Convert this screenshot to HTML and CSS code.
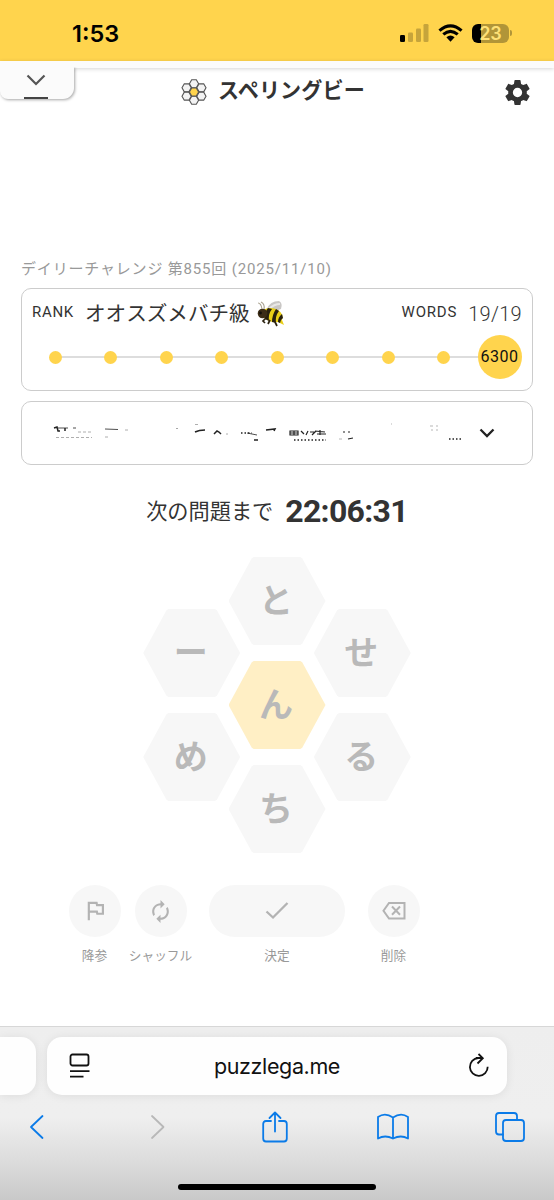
FILE: index.html
```html
<!DOCTYPE html>
<html lang="ja">
<head>
<meta charset="utf-8">
<title>スペリングビー</title>
<link rel="stylesheet" href="styles.css">
</head>
<body>
<div class="status">
  <span class="clock">1:53</span>
  <div class="indicators">
    <svg class="signal" width="30" height="18" viewBox="0 0 30 18"><rect x="0" y="11" width="5" height="7" rx="1.3"/><g opacity=".22"><rect x="8" y="8.500" width="5" height="9.500" rx="1.300"/><rect x="16" y="4.500" width="5" height="13.500" rx="1.300"/><rect x="23.500" y="0" width="5" height="18" rx="1.300"/></g></svg>
    <svg class="wifi" width="25" height="18" viewBox="0 0 26 18"><g fill="none" stroke="#000" stroke-width="3.200"><path d="M1.500 6.500Q13-3.500 24.500 6.500"/><path d="M5.500 10.500Q13 4 20.500 10.500"/></g><path d="M8.700 13.300Q13 9.800 17.300 13.300L13 18Z"/></svg>
    <div class="battery"><span>23</span></div><i class="battery-tip"></i>
  </div>
</div>
<div class="strip"></div>
<header class="header">
  <div class="pull-tab"><svg width="20" height="12" viewBox="0 0 20 12"><path d="M1.500 1.500L10 10L18.500 1.500" fill="none" stroke="#555" stroke-width="2.200"/></svg><i></i></div>
  <div class="brand">
    <svg width="26" height="28" viewBox="-13 -14 26 28"><defs><path id="cell" d="M-4.600 0L-2.300-4H2.300L4.600 0L2.300 4H-2.300Z" stroke="#555" stroke-width="1.100"/></defs><g fill="#f3f3f3"><use href="#cell" y="-8.300"/><use href="#cell" y="8.300"/><use href="#cell" x="-7.400" y="-4.150"/><use href="#cell" x="-7.400" y="4.150"/><use href="#cell" x="7.400" y="-4.150"/><use href="#cell" x="7.400" y="4.150"/></g><use href="#cell" fill="#ffd44d"/></svg>
    <h1>スペリングビー</h1>
  </div>
  <svg class="gear" width="31" height="31" viewBox="0 0 24 24"><path fill="#333" d="M19.140 12.940c.04-.3.060-.61.060-.94 0-.32-.02-.64-.07-.94l2.030-1.580c.18-.14.230-.41.120-.61l-1.920-3.320c-.12-.22-.37-.29-.59-.22l-2.390.96c-.5-.38-1.030-.7-1.620-.94l-.36-2.540c-.04-.24-.24-.41-.48-.41h-3.840c-.24 0-.43.170-.47.410l-.36 2.540c-.59.240-1.130.57-1.620.94l-2.390-.96c-.22-.08-.47 0-.59.220L2.740 8.870c-.12.210-.08.470.120.610l2.030 1.580c-.05.300-.09.630-.09.940s.02.640.07.940l-2.030 1.580c-.18.140-.23.410-.12.610l1.920 3.320c.12.220.37.290.59.220l2.390-.96c.5.380 1.030.7 1.620.94l.36 2.540c.05.240.24.410.48.410h3.840c.24 0 .44-.17.470-.41l.36-2.540c.59-.24 1.130-.56 1.620-.94l2.390.96c.22.080.47 0 .59-.22l1.920-3.320c.12-.22.070-.47-.12-.61zM12 15.600A3.600 3.600 0 1 1 12 8.400a3.600 3.600 0 0 1 0 7.200z"/></svg>
</header>
<main>
  <p class="daily">デイリーチャレンジ 第855回 (2025/11/10)</p>
  <section class="card rank">
    <div class="rank-row">
      <span class="small">RANK</span><span class="level">オオスズメバチ級</span>
      <svg class="bee" width="30" height="28" viewBox="0 0 30 28">
        <path d="M10 9Q13 1 22 1Q26 3 24 9Q19 12 10 10Z" fill="#c9c7c5"/><path d="M12 9Q17 4 23 4" stroke="#e9e8e6" stroke-width="2" fill="none"/>
        <path d="M6 10Q13 6 21 10Q27 14 25 20L27 25L21 22Q13 23 7 18Z" fill="#e9cf17"/>
        <path d="M11 8L15 9Q11 14 12 21L8 19Q7 13 11 8ZM19 9L22 11Q18 16 19 23L15 22Q15 15 19 9ZM25 14L26 18Q23 20 23 23L21 22Q21 17 25 14Z" fill="#28200f"/>
        <circle cx="5.500" cy="13.500" r="4.800" fill="#3b2c16"/><circle cx="3.500" cy="13" r="1.400" fill="#120e09"/>
        <path d="M5 9Q4 3 1 3M7 9Q8 4 4 2" stroke="#aaa391" stroke-width="1.100" fill="none"/>
        <path d="M9 18L6 21L8 23M13 20L11 24M18 22L20 26" stroke="#2a210f" stroke-width="1.700" fill="none"/>
      </svg>
      <span class="small words">WORDS</span><span class="count">19/19</span>
    </div>
    <div class="track"><i></i><i></i><i></i><i></i><i></i><i></i><i></i><i></i><b>6300</b></div>
  </section>
  <section class="card redacted">
    <svg class="marks" width="420" height="24" viewBox="50 420 420 24" fill="none" stroke="#222">
      <path stroke-width="1.500" d="M54 427L57 426L58 430H60M65 427V430M195 431Q199 429 205 429M214 433L217 430L219 431L221 433M254 439H258M266 429L275 428L274 430"/>
      <path stroke-width=".8" d="M58 427H68M73 427H76M105 428L118 428.500M177 427V428M247 432L257 434"/>
      <path stroke-width=".8" stroke="#999" stroke-dasharray="3 2" d="M56 436.500H92M78 431H91M105 436H108M125 429H130M195 423.500H199M226 433H228"/>
      <path stroke-width="1.300" stroke-dasharray="1.500 2" d="M241 432H252M294 439H326M449 438H463"/>
      <path stroke-width="1.200" d="M290 430H298V434H290ZM290 432H298M294 430V434M301 430L304 433M308 430L306 434M310 431H315L312 434M315 430L325 431M317 433H326M320 429V434M343 431H345M348 431H350M348 438L353 437"/>
      <path stroke-width=".7" stroke="#999" d="M339 438H342M391 423H392M430 425H433M436 425H438M431 429H433M436 429H438"/>
    </svg>
    <svg class="down" width="16" height="11" viewBox="0 0 16 11"><path d="M1.500 1.500L8 8L14.500 1.500" fill="none" stroke="#222" stroke-width="2.300"/></svg>
  </section>
  <div class="timer"><span>次の問題まで</span><strong>22:06:31</strong></div>
  <div class="hive">
    <div class="col"><div class="hex">ー</div><div class="hex">め</div></div>
    <div class="col"><div class="hex">と</div><div class="hex center">ん</div><div class="hex">ち</div></div>
    <div class="col"><div class="hex">せ</div><div class="hex">る</div></div>
  </div>
  <div class="actions">
    <div class="action give-up"><div class="btn"><svg width="26" height="26" viewBox="0 0 24 24"><path fill="#b3b3b3" d="M12.360 6l.4 2H18v6h-3.360l-.4-2H7V6h5.360M14 4H5v17h2v-7h5.600l.4 2h7V6h-5.600z" transform="translate(.3 -.5)"/></svg></div><span>降参</span></div>
    <div class="action shuffle"><div class="btn"><svg width="25" height="25" viewBox="0 0 24 24"><path fill="#b3b3b3" d="M12 6v3l4-4-4-4v3c-4.420 0-8 3.580-8 8 0 1.570.46 3.030 1.240 4.260L6.700 14.800c-.45-.83-.7-1.790-.7-2.800 0-3.310 2.690-6 6-6zm6.760 1.740L17.300 9.200c.44.840.7 1.790.7 2.800 0 3.310-2.690 6-6 6v-3l-4 4 4 4v-3c4.420 0 8-3.580 8-8 0-1.570-.46-3.030-1.240-4.260z"/></svg></div><span>シャッフル</span></div>
    <div class="action enter"><div class="btn"><svg width="24" height="20" viewBox="0 0 24 20"><path d="M1.500 10.500L8 16.500L22.500 2" fill="none" stroke="#b3b3b3" stroke-width="2.300"/></svg></div><span>決定</span></div>
    <div class="action delete"><div class="btn"><svg width="24" height="20" viewBox="0 0 24 20"><path d="M7 2H22.500V17.500H7L1.500 9.750ZM10 5.500L18 13.800M18 5.500L10 13.800" fill="none" stroke="#b3b3b3" stroke-width="2"/></svg></div><span>削除</span></div>
  </div>
</main>
<footer class="browser">
  <div class="tabs">
    <div class="prev-tab"></div>
    <div class="address">
      <svg width="22" height="26" viewBox="0 0 22 26"><g fill="none" stroke="#111" stroke-width="1.800"><rect x="1.500" y="1.500" width="18" height="11" rx="2"/><path d="M1 18.200H20.500M1 23.600H14.500"/></g></svg>
      <span>puzzlega.me</span>
      <svg width="22" height="26" viewBox="0 0 22 26"><path d="M10.300 5A8.900 8.900 0 1 0 19.700 13.800M7.800 5H14.500M10.500 1L14.800 5.200L9.500 10.500" fill="none" stroke="#111" stroke-width="1.800"/></svg>
    </div>
  </div>
  <nav class="tools">
    <svg width="16" height="26" viewBox="0 0 16 26"><path d="M13.500 2L2 13L13.500 24"/></svg>
    <svg class="off" width="16" height="26" viewBox="0 0 16 26"><path d="M2 2L13.500 13L2 24"/></svg>
    <svg class="share" width="28" height="34" viewBox="0 0 28 34"><path d="M10 11H5Q2.200 11 2.200 14V28.500Q2.200 31.500 5 31.500H23Q25.800 31.500 25.800 28.500V14Q25.800 11 23 11H18M14 21.500V2.500M8.500 8L14 2.500L19.500 8"/></svg>
    <svg class="book" width="34" height="28" viewBox="0 0 34 28"><path d="M17 4.500Q9-1 2 4V25.500Q9 21.500 17 25.500Q25 21.500 32 25.500V4Q25-1 17 4.500V25.500"/></svg>
    <svg class="pages" width="32" height="32" viewBox="0 0 32 32"><path d="M9 23.500H5Q2 23.500 2 20.500V5Q2 2 5 2H20Q23 2 23 5V9"/><rect x="9" y="9" width="21" height="21" rx="3"/></svg>
  </nav>
  <div class="home"></div>
</footer>
</body>
</html>
```
FILE: styles.css
```css
* { box-sizing: border-box; }
body { margin: 0; width: 554px; height: 1200px; overflow: hidden; display: flex; flex-direction: column; background: #fff; color: #333; font-family: Roboto, "Noto Sans CJK JP", sans-serif; }
svg { display: block; flex: none; }
i { display: block; }
.status { height: 61px; flex: none; background: #ffd44d; display: flex; justify-content: space-between; padding: 5px 42px 0 72px; align-items: center; color: #000; }
.clock { font: 600 23.5px/28px Inter, sans-serif; letter-spacing: 0; padding-top: 1px; }
.indicators { display: flex; align-items: center; }
.wifi { margin: 0 9px 0 8px; }
.battery { width: 37px; height: 19px; border-radius: 6px; background: linear-gradient(90deg, #000 9px, #b19538 9px); color: #ffe176; font: 600 18px/19px Inter, sans-serif; text-align: center; }
.battery-tip { width: 2px; height: 6px; margin-left: 1px; border-radius: 0 3px 3px 0; background: #b19538; }
.strip { height: 7px; flex: none; background: #fbfbfb; box-shadow: 0 1px 4px rgba(0,0,0,.17); }
.header { height: 44px; flex: none; display: flex; align-items: flex-start; }
.pull-tab { position: relative; width: 74px; height: 32px; margin: -1px 1px 0 0; border-radius: 0 0 11px 8px; background: #fbfbfb; box-shadow: 1px 1px 3px rgba(0,0,0,.35); clip-path: inset(0 -5px -5px 0); display: flex; flex-direction: column; align-items: center; justify-content: space-between; padding: 7px 2px 0 0; }
.pull-tab i { width: 24px; height: 2px; background: #444; }
.brand { display: flex; align-items: center; gap: 11px; margin: 8px 0 0 106px; height: 32px; }
h1 { margin: 0 0 2px; font-size: 21.100px; line-height: 30px; font-weight: 700; white-space: nowrap; letter-spacing: .1px; }
.gear { margin: 9px 21px 0 auto; }
main { flex: 1; padding: 146px 21px 0; display: flex; flex-direction: column; }
.daily { margin: 0; height: 30px; line-height: 23px; font-size: 15px; letter-spacing: .820px; color: #999; white-space: nowrap; }
.card { border: 1.500px solid #ccc; border-radius: 10px; width: 512px; flex: none; }
.rank { height: 103px; }
.rank-row { display: flex; align-items: center; height: 46px; padding: 3px 10px 0; white-space: nowrap; }
.small { font-size: 15px; letter-spacing: .7px; padding-bottom: 3px; }
.level { font-size: 20.600px; margin-left: 11px; padding-bottom: 3px; }
.bee { margin-left: 7px; }
.words { margin-left: auto; letter-spacing: .800px; }
.count { font-size: 20px; letter-spacing: .300px; font-weight: 300; margin-left: 11px; }
.track { display: flex; align-items: center; gap: 42.500px; height: 44px; padding: 0 11px 0 26.500px; background: linear-gradient(#ddd, #ddd) 33px center / 430px 2px no-repeat; }
.track i { width: 13px; height: 13px; flex: none; border-radius: 50%; background: #ffd44d; }
.track b { width: 44px; height: 44px; flex: none; margin-left: -15px; border-radius: 50%; background: #ffd44d; color: #111; font-weight: 400; font-size: 16px; line-height: 44px; letter-spacing: .5px; text-align: center; }
.redacted { height: 64px; margin-top: 10px; display: flex; align-items: center; padding-left: 28px; }
.down { margin-left: 9px; }
.timer { display: flex; justify-content: center; align-items: center; gap: 12px; height: 48px; margin-top: 22px; white-space: nowrap; }
.timer span { font-size: 21.200px; padding-bottom: 4px; }
.timer strong { font-size: 32px; line-height: 48px; letter-spacing: -.700px; }
.hive { display: flex; align-items: center; justify-content: center; height: 296px; margin-top: 22px; }
.col { display: flex; flex-direction: column; gap: 16px; }
.col + .col { margin-left: -11.700px; }
.hex { width: 97px; height: 88px; background: #f7f7f7; clip-path: polygon(26% 0, 74% 0, 76% 1.500%, 100% 50%, 76% 98.500%, 74% 100%, 26% 100%, 24% 98.500%, 0 50%, 24% 1.500%); display: flex; align-items: center; justify-content: center; padding: 0 2px 4px 0; font: 700 34px/1 "Noto Sans CJK JP", sans-serif; color: #b9b9b9; }
.center { background: #ffefc5; }
.actions { display: flex; margin: 32px 0 0 40.500px; }
.action { display: flex; flex-direction: column; align-items: center; width: 66px; font-size: 12.700px; line-height: 20px; color: #999; white-space: nowrap; }
.action span { margin-top: 9px; }
.btn { width: 52px; height: 52px; border-radius: 26px; background: #f7f7f7; display: flex; align-items: center; justify-content: center; }
.enter { width: 136px; margin-left: 15.500px; }
.enter .btn { width: 136px; }
.delete { margin-left: 15.500px; }
.browser { height: 174px; flex: none; border-top: 1px solid #d7d7d7; background: linear-gradient(#eee 0, #efefef 52%, #dedede 75%, #c9c9c9 100%); }
.tabs { display: flex; gap: 11px; padding-top: 10px; }
.prev-tab, .address { height: 58px; background: #fefefe; box-shadow: 0 1px 10px rgba(0,0,0,.08); }
.prev-tab { width: 36px; border-radius: 0 15px 15px 0; }
.address { width: 460px; border-radius: 15px; display: flex; align-items: center; justify-content: space-between; padding: 0 17px 0 22px; color: #111; font: 21.500px Inter, sans-serif; letter-spacing: -.380px; }
.address span { padding-right: 5px; }
.tools { height: 64px; display: flex; align-items: center; padding-left: 29px; }
.tools path, .tools rect { fill: none; stroke: #0b7be8; stroke-width: 1.800; stroke-linecap: round; stroke-linejoin: round; }
.tools .off { margin-left: 105px; }
.tools .off path { stroke: #b8b8b8; }
.share { margin-left: 94.500px; }
.book { margin-left: 87px; }
.pages { margin-left: 84.500px; }
.home { width: 198px; height: 6px; margin: 25px 0 0 178px; border-radius: 3px; background: #000; }
```
